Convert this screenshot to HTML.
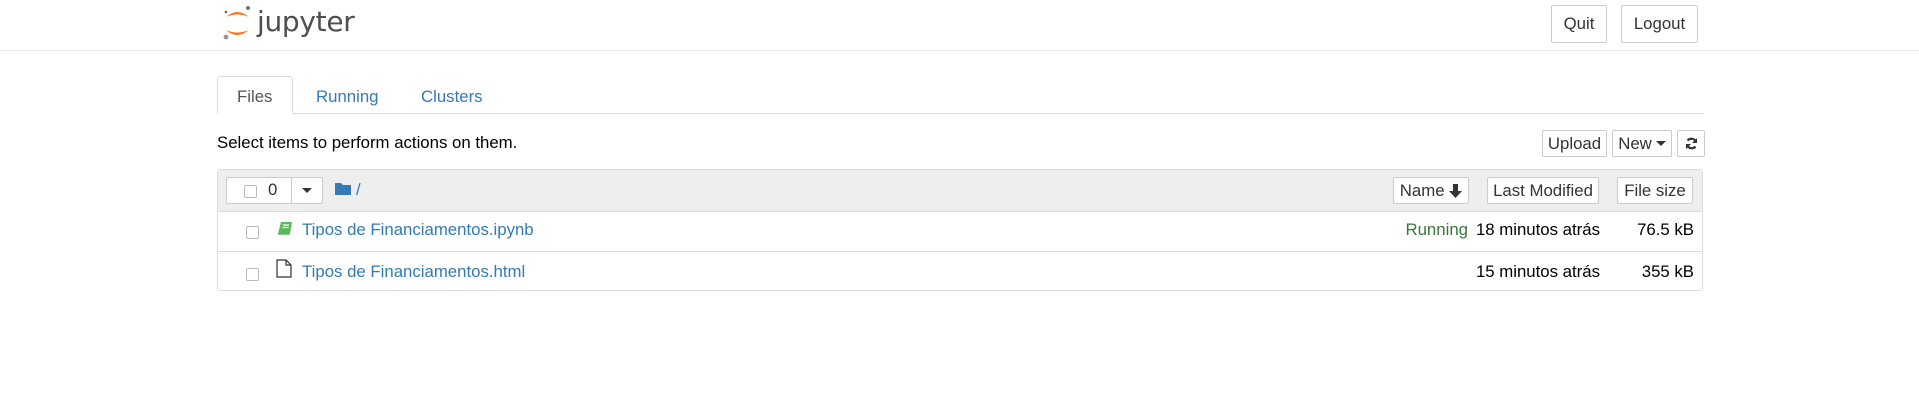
<!DOCTYPE html>
<html><head><style>
body{margin:0;width:1919px;height:402px;background:#fff;font-family:"Liberation Sans",Arial,sans-serif;color:#000;position:relative;overflow:hidden}
.a{position:absolute;line-height:1}
.btn{position:absolute;box-sizing:border-box;border:1px solid #ccc;background:#fff;border-radius:2px;color:#333;font-size:16.8px;display:flex;align-items:center;justify-content:center}
a{color:#337ab7;text-decoration:none}
.cb{position:absolute;width:11px;height:11px;border:1px solid #bbb;border-radius:2px;background:#fff}
.t{font-size:16.8px}
</style></head><body>
<div class="a" style="left:0;top:50px;width:1919px;height:1px;background:#e7e7e7"></div>
<svg class="a" style="left:222px;top:5px" width="32" height="36" viewBox="0 0 32 36">
<path d="M4 12 Q15 2 27 12 Q15 7 4 12Z" fill="#f37726"/>
<path d="M4 25 Q15 35 27 25 Q15 30 4 25Z" fill="#f37726"/>
<circle cx="26" cy="3" r="2" fill="#767677"/><circle cx="4" cy="32" r="2.4" fill="#989798"/><circle cx="4" cy="7" r="1.3" fill="#616262"/>
</svg>
<div class="a" style="left:257px;top:8px;font-size:28px;color:#4e4e4e;font-family:'DejaVu Sans','Liberation Sans',sans-serif;letter-spacing:-0.3px">jupyter</div>
<div class="btn" style="left:1551px;top:5px;width:56px;height:38px">Quit</div>
<div class="btn" style="left:1621px;top:5px;width:77px;height:38px">Logout</div>

<div class="a" style="left:217px;top:113px;width:1486px;height:1px;background:#ddd"></div>
<div class="a" style="left:217px;top:76px;width:76px;height:38px;box-sizing:border-box;border:1px solid #ddd;border-bottom:1px solid #fff;background:#fff;border-radius:3px 3px 0 0"></div>
<div class="a t" style="left:237px;top:89px;color:#555">Files</div>
<div class="a t" style="left:316px;top:89px"><a>Running</a></div>
<div class="a t" style="left:421px;top:89px"><a>Clusters</a></div>

<div class="a t" style="left:217px;top:135px">Select items to perform actions on them.</div>
<div class="btn" style="left:1542px;top:130px;width:65px;height:27px">Upload</div>
<div class="btn" style="left:1612px;top:130px;width:60px;height:27px">New<span style="display:inline-block;margin-left:4px;border-left:5px solid transparent;border-right:5px solid transparent;border-top:5px solid #333"></span></div>
<div class="btn" style="left:1677px;top:130px;width:28px;height:27px"><svg width="13" height="13" viewBox="0 0 13 13"><path d="M11 5A5 5 0 0 0 2.5 3.5M2 8a5 5 0 0 0 8.5 1.5" stroke="#333" stroke-width="2.2" fill="none"/><path d="M12 1v5H7zM1 12V7h5z" fill="#333"/></svg></div>

<div class="a" style="left:217px;top:169px;width:1486px;height:122px;box-sizing:border-box;border:1px solid #ddd;border-radius:3px"></div>
<div class="a" style="left:218px;top:170px;width:1484px;height:41px;background:#eee;border-bottom:1px solid #ddd"></div>
<div class="a" style="left:218px;top:251px;width:1484px;height:1px;background:#ddd"></div>
<div class="btn" style="left:226px;top:177px;width:66px;height:27px"></div>
<div class="cb" style="left:244px;top:185px"></div>
<div class="a t" style="left:268px;top:182px;color:#333">0</div>
<div class="btn" style="left:291px;top:177px;width:32px;height:27px"><span style="border-left:5px solid transparent;border-right:5px solid transparent;border-top:5px solid #333"></span></div>
<svg class="a" style="left:335px;top:182px" width="16" height="13" viewBox="0 0 16 13"><path d="M0 1h6l2 2h8v10H0z" fill="#337ab7"/></svg>
<div class="a t" style="left:356px;top:182px;color:#337ab7">/</div>
<div class="btn" style="left:1393px;top:177px;width:76px;height:27px">Name&nbsp;<svg width="13" height="14" viewBox="0 0 13 14"><path d="M4 0h5v7h4l-6.5 7L0 7h4z" fill="#333"/></svg></div>
<div class="btn" style="left:1487px;top:177px;width:112px;height:27px">Last Modified</div>
<div class="btn" style="left:1617px;top:177px;width:76px;height:27px">File size</div>

<div class="cb" style="left:246px;top:226px"></div>
<svg class="a" style="left:277px;top:221px" width="16" height="16" viewBox="0 0 16 16"><path d="M4 1h11l-3 12H1z" fill="#5cb85c"/><path d="M6 4h6M5.5 6.5h6" stroke="#fff" stroke-width="1.2"/><path d="M1 13h11l2-9" stroke="#5cb85c" stroke-width="1.5" fill="none"/></svg>
<div class="a t" style="left:302px;top:222px"><a>Tipos de Financiamentos.ipynb</a></div>
<div class="a t" style="left:1300px;top:222px;width:168px;text-align:right;color:#3c763d">Running</div>
<div class="a t" style="left:1390px;top:222px;width:210px;text-align:right">18 minutos atrás</div>
<div class="a t" style="left:1590px;top:222px;width:104px;text-align:right">76.5 kB</div>

<div class="cb" style="left:246px;top:268px"></div>
<svg class="a" style="left:276px;top:259px" width="16" height="19" viewBox="0 0 16 19"><path d="M1 1h9l5 5v12H1z M10 1v5h5" fill="none" stroke="#333" stroke-width="1.2"/></svg>
<div class="a t" style="left:302px;top:264px"><a>Tipos de Financiamentos.html</a></div>
<div class="a t" style="left:1390px;top:264px;width:210px;text-align:right">15 minutos atrás</div>
<div class="a t" style="left:1590px;top:264px;width:104px;text-align:right">355 kB</div>
</body></html>
